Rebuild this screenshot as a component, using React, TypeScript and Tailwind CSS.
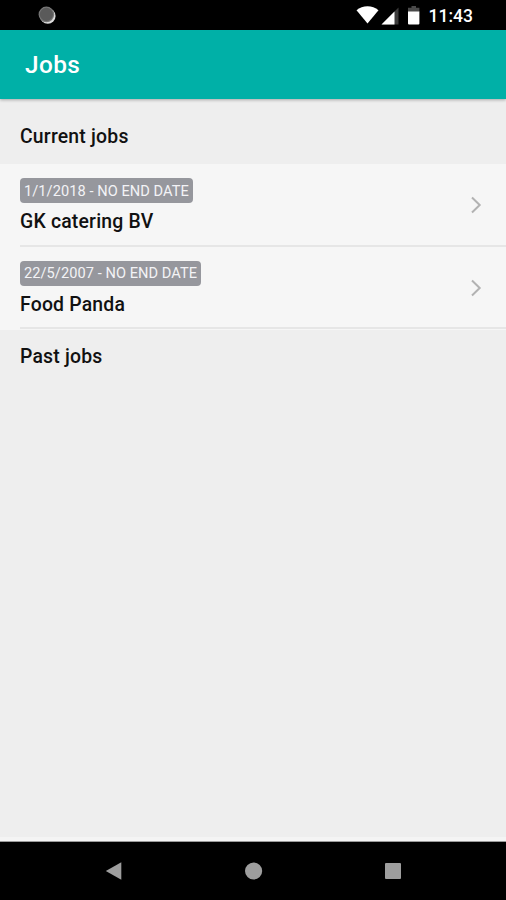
interface Job {
  id: string;
  name: string;
  period: string;
}

const currentJobs: Job[] = [
  { id: 'gk', name: 'GK catering BV', period: '1/1/2018 - NO END DATE' },
  { id: 'panda', name: 'Food Panda', period: '22/5/2007 - NO END DATE' }
];

function StatusBar() {
  return (
    <div className="flex h-[30px] shrink-0 items-center justify-between bg-black pl-[38px] pr-[33px]">
      <svg width="18" height="18" viewBox="0 0 18 18">
        <circle cx="9.8" cy="9.9" r="7.8" fill="#dcdcdc" />
        <circle cx="8.4" cy="8.4" r="7.8" fill="#777777" />
        <circle cx="8.4" cy="8.4" r="6.6" fill="#5a5a5a" />
      </svg>

      <div className="flex items-center">
        <svg width="66" height="20" viewBox="0 0 66 20">
          {/* Wifi */}
          <path d="M0.5 5.2C6.5 -0.2 16.5 -0.2 22.5 5.2L11.5 18.6Z" fill="#ffffff" />
          {/* Signal */}
          <path d="M42.5 2.5V19.5H25.5Z" fill="#3c3c3c" />
          <path d="M38.5 6.5V19.5H25.5Z" fill="#ffffff" />
          {/* Battery */}
          <path d="M55.5 1H60V2.8H63.4V7H52V2.8H55.5Z" fill="#4a4a4a" />
          <path d="M52 6.5H63.4V18.5Q63.4 19.5 62.4 19.5H53Q52 19.5 52 18.5Z" fill="#ffffff" />
        </svg>
        <span className="ml-[7px] mt-px text-[17.5px] font-medium leading-[18px] text-white">11:43</span>
      </div>
    </div>
  );
}

function JobRow({ job }: { job: Job }) {
  return (
    <li className="h-[82.5px] bg-[#f6f6f6] pl-5">
      <div className="flex h-full items-center justify-between border-b-2 border-[#e6e6e6] pr-[24px]">
        <div className="flex flex-col items-start pt-[4px]">
          <span className="flex h-[25px] items-center rounded-[4px] bg-[#96979d] px-1 pt-px text-[14.6px] leading-none tracking-[0.06px] text-[#f3f3f6]">
            {job.period}
          </span>
          <span className="mt-[6px] text-[19.4px] font-medium leading-[25px] tracking-[0.2px] text-[#111111]">{job.name}</span>
        </div>
        <svg className="mt-[2px]" width="12" height="18" viewBox="0 0 12 18" fill="none" stroke="#b2b2b2" strokeWidth="2">
          <path d="M2 1.5L9.7 9L2 16.5" />
        </svg>
      </div>
    </li>
  );
}

function NavigationBar() {
  return (
    <nav className="flex h-[58px] shrink-0 items-center justify-between bg-black pl-[105px] pr-[105px]">
      <svg width="17" height="18" viewBox="0 0 17 18" fill="#9e9e9e">
        <path d="M16.3 0.3V17.7L0.8 9Z" />
      </svg>
      <svg width="18" height="18" viewBox="0 0 18 18" fill="#9e9e9e">
        <circle cx="8.6" cy="9" r="8.6" />
      </svg>
      <div className="size-4 rounded-[1px] bg-[#9e9e9e]" />
    </nav>
  );
}

export default function App() {
  return (
    <div className="flex h-screen w-full flex-col bg-[#eeeeee] font-['Roboto',sans-serif]">
      <StatusBar />

      <header className="z-10 flex h-[69px] shrink-0 items-center bg-[#00b0a7] pl-[25px] pt-[2px] shadow-[0_1px_3px_rgba(0,0,0,0.3)]">
        <h1 className="text-[24.4px] font-medium tracking-[0.4px] text-white">Jobs</h1>
      </header>

      <main className="grow">
        <h2 className="flex h-[65px] items-center pl-5 pt-[10px] text-[19.4px] font-medium tracking-[0.2px] text-[#111111]">
          Current jobs
        </h2>
        <ul className="bg-[#f6f6f6] pb-px">
          {currentJobs.map((job) => (
            <JobRow key={job.id} job={job} />
          ))}
        </ul>
        <h2 className="pl-5 pt-[12px] text-[19.4px] font-medium tracking-[0.2px] text-[#111111]">Past jobs</h2>
      </main>

      <div className="h-[5px] shrink-0 border-b border-[#9b9b9b] bg-[#f4f4f4]" />
      <NavigationBar />
    </div>
  );
}
